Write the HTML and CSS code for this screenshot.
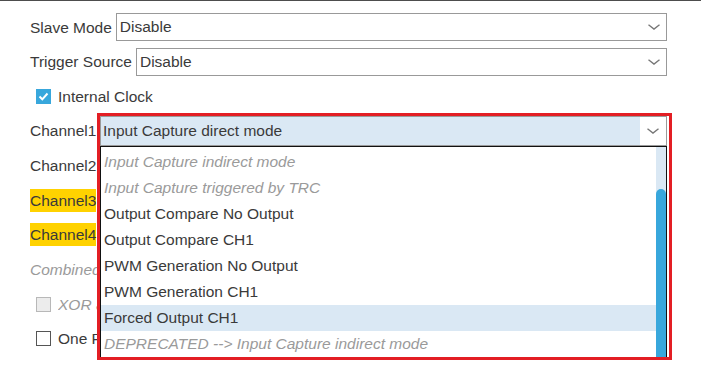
FILE: index.html
```html
<!DOCTYPE html>
<html>
<head>
<meta charset="utf-8">
<link rel="stylesheet" href="styles.css">
</head>
<body>
<div class="panel">
  <div class="row">
    <span class="label">Slave Mode</span>
    <div class="select"><span>Disable</span><svg class="chev" width="12" height="6" viewBox="0 0 12 6"><polyline points="0.5,0.8 6,5 11.5,0.8" fill="none" stroke="#777" stroke-width="1.4"/></svg></div>
  </div>
  <div class="row">
    <span class="label">Trigger Source</span>
    <div class="select"><span>Disable</span><svg class="chev" width="12" height="6" viewBox="0 0 12 6"><polyline points="0.5,0.8 6,5 11.5,0.8" fill="none" stroke="#777" stroke-width="1.4"/></svg></div>
  </div>
  <div class="row check-row">
    <span class="box checked"><svg width="15" height="15" viewBox="0 0 15 15"><polyline points="3.5,7.5 6.3,10.3 11.5,4.5" fill="none" stroke="#fff" stroke-width="2"/></svg></span>
    <span class="label">Internal Clock</span>
  </div>
  <div class="row">
    <span class="label">Channel1</span>
    <div class="select"></div>
  </div>
  <div class="row">
    <span class="label">Channel2</span>
    <div class="select"></div>
  </div>
  <div class="row">
    <span class="label warn">Channel3</span>
    <div class="select"></div>
  </div>
  <div class="row">
    <span class="label warn">Channel4</span>
    <div class="select"></div>
  </div>
  <div class="row">
    <span class="label disabled clip">Combined Channels</span>
  </div>
  <div class="row check-row">
    <span class="box off"></span>
    <span class="label disabled clip2">XOR activation</span>
  </div>
  <div class="row check-row">
    <span class="box"></span>
    <span class="label clip2">One Pulse Mode</span>
  </div>

  <div class="combo-open">
    <div class="combo-select">
      <span class="combo-text">Input Capture direct mode</span>
      <span class="combo-btn"><svg width="12" height="6" viewBox="0 0 12 6"><polyline points="0.5,0.8 6,5 11.5,0.8" fill="none" stroke="#777" stroke-width="1.4"/></svg></span>
    </div>
    <div class="list">
      <div class="item disabled">Input Capture indirect mode</div>
      <div class="item disabled">Input Capture triggered by TRC</div>
      <div class="item">Output Compare No Output</div>
      <div class="item">Output Compare CH1</div>
      <div class="item">PWM Generation No Output</div>
      <div class="item">PWM Generation CH1</div>
      <div class="item hover">Forced Output CH1</div>
      <div class="item disabled">DEPRECATED --&gt; Input Capture indirect mode</div>
      <div class="scroll"><div class="thumb"></div></div>
    </div>
  </div>
</div>
</body>
</html>
```

FILE: styles.css
```css
html, body {
  margin: 0;
  padding: 0;
  background: #fff;
}
body {
  font-family: "Liberation Sans", Arial, sans-serif;
  font-size: 15.5px;
  color: #3a3a3a;
  overflow: hidden;
}
.panel {
  position: relative;
  border-top: 1px solid #4d4d4d;
  padding: 8.7px 34px 0 30px;
  height: 391px;
  box-sizing: border-box;
}
.row {
  display: flex;
  align-items: center;
  gap: 4px;
  height: 34.67px;
}
.label {
  white-space: nowrap;
  line-height: 23px;
}
.label.warn {
  background: #ffd200;
}
.label.disabled {
  color: #9a9a9a;
  font-style: italic;
}
.label.clip {
  width: 67px;
  overflow: hidden;
}
.label.clip2 {
  width: 39px;
  overflow: hidden;
}
.select {
  flex: 1;
  height: 28px;
  box-sizing: border-box;
  border: 1px solid #999;
  display: flex;
  align-items: center;
  justify-content: space-between;
  padding: 0 6px 0 3px;
}
.chev {
  display: block;
}
.check-row {
  padding-left: 6px;
  gap: 7px;
}
.box {
  width: 15px;
  height: 15px;
  box-sizing: border-box;
  border: 1px solid #555;
  background: #fff;
  display: block;
  flex: none;
}
.box.checked {
  border: none;
  background: #38a7dc;
}
.box.checked svg {
  display: block;
}
.box.off {
  border-color: #b8b8b8;
  background: #ececec;
}

.combo-open {
  position: absolute;
  left: 97px;
  top: 112px;
  width: 575px;
  height: 247px;
  box-sizing: border-box;
  border: 3px solid #e31e24;
  background: #fff;
  overflow: hidden;
}
.combo-select {
  width: 567px;
  height: 30px;
  box-sizing: border-box;
  border: 1px solid #9a9a9a;
  background: #dae8f4;
  display: flex;
  align-items: stretch;
}
.combo-text {
  flex: 1;
  display: flex;
  align-items: center;
  padding-left: 2px;
}
.combo-btn {
  width: 26px;
  background: #fff;
  display: flex;
  align-items: center;
  justify-content: center;
}
.combo-btn svg {
  display: block;
}
.list {
  position: relative;
  width: 567px;
  height: 216px;
  box-sizing: border-box;
  border: 1px solid #111;
  border-bottom: none;
  padding-top: 2px;
  padding-right: 10px;
}
.item {
  height: 26px;
  line-height: 26px;
  padding-left: 3px;
  white-space: nowrap;
  overflow: hidden;
}
.item.disabled {
  color: #9a9a9a;
  font-style: italic;
}
.item.hover {
  background: #dae8f4;
}
.scroll {
  position: absolute;
  right: 0;
  top: 0;
  bottom: 0;
  width: 10px;
  background: #dae8f4;
}
.thumb {
  position: absolute;
  left: 0;
  right: 0;
  top: 42px;
  bottom: 0;
  background: #38a7dc;
  border-radius: 5px 5px 4px 4px;
}
```
